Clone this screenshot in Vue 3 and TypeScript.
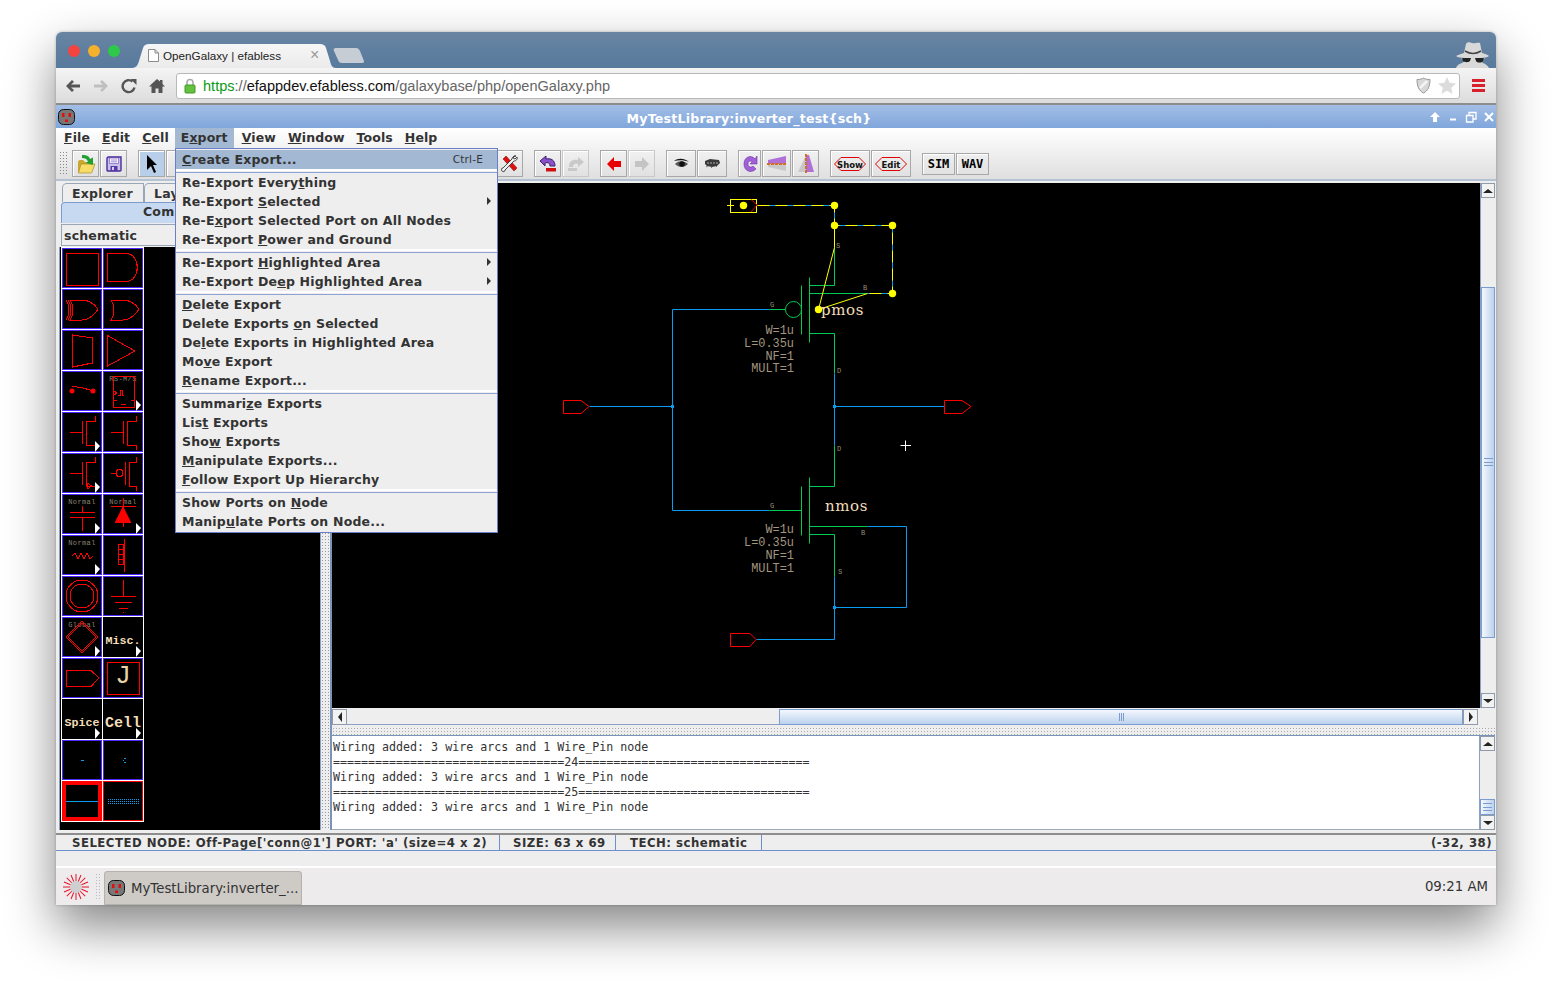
<template>
  <div class="stage">
    <div class="win">
      <div class="tabstrip">
        <div class="lights"><i class="red"></i><i class="amber"></i><i class="green"></i></div>
        <div class="tab">
          <svg class="tab-shape" width="204" height="25" viewBox="0 0 204 25">
            <defs>
              <linearGradient id="tabfill" x1="0" y1="0" x2="0" y2="1">
                <stop offset="0" stop-color="#f6f6f6" />
                <stop offset="1" stop-color="#ebebeb" />
              </linearGradient>
            </defs>
            <path d="M0 25C5 25 6 21 7 18L11 5C12 2 14 1 17 1H188C191 1 193 2 194 5L198 18C199 22 200 25 204 25Z" fill="url(#tabfill)" />
          </svg>
          <svg class="page-ico" width="11" height="13" viewBox="0 0 11 13"><path d="M.5.5h6.500l3.500 3.500v8.500h-10zM7 .5v3.500h3.500" fill="#fff" stroke="#8b8b8b" /></svg>
          <span class="tab-title">OpenGalaxy | efabless</span>
          <span class="tab-close">×</span>
        </div>
        <svg class="newtab" width="32" height="15" viewBox="0 0 32 15"><path d="M3 0H23C25 0 26 1 27 3L31 13C31 14 31 15 29 15H9C7 15 6 14 5.500 13L1 3C0 1 1 0 3 0Z" fill="#c6cdd4" /></svg>
        <svg class="spy" width="38" height="27" viewBox="0 0 38 27">
          <path d="M11 12L13 3C14 1 16 1 19 2C22 3 25 1 27 2L29 12C33 13 35 14 36 15C33 17 29 17 20 17C11 17 6 17 3 15C5 14 8 13 11 12Z" fill="#d9d9d9" />
          <path d="M8 17C10 19 11 20 12 20L9 22C5 23 4 25 3 27H36C35 25 33 23 30 22L28 20C30 19 31 18 32 17Z" fill="#d9d9d9" />
          <path d="M9 17H18L17 20C15 22 11 21 10 20ZM22 17H31L30 20C29 22 24 22 23 20Z" fill="#222" />
          <path d="M12 10C17 13 23 13 28 10" stroke="#444" stroke-width="1.500" fill="none" />
        </svg>
      </div>

      <div class="navbar">
        <svg class="nav-ico" width="16" height="16" viewBox="0 0 16 16"><path d="M1 8L7 2L9 4L6 6.500H15V9.500H6L9 12L7 14Z" fill="#555" /></svg>
        <svg class="nav-ico" width="16" height="16" viewBox="0 0 16 16"><path d="M15 8L9 2L7 4L10 6.500H1V9.500H10L7 12L9 14Z" fill="#bfbfbf" /></svg>
        <svg class="nav-ico" width="16" height="16" viewBox="0 0 16 16"><path d="M13.500 9.500A6 6 0 1 1 11.500 3.500" fill="none" stroke="#555" stroke-width="2.400" /><path d="M9.500 1L15.500 1V7z" fill="#555" /></svg>
        <svg class="nav-ico" width="16" height="16" viewBox="0 0 16 16"><path d="M8 1L0 8.500h2.500V15h4v-4.500h3V15h4V8.500H16L13.500 6V2h-2.500v1.500z" fill="#555" /></svg>
        <div class="urlbox">
          <svg width="12" height="16" viewBox="0 0 12 16"><path d="M3 7V4.500a3 3 0 0 1 6 0V7" fill="none" stroke="#aaa" stroke-width="1.600" /><rect x="1" y="7" width="10" height="8" rx="1" fill="#66c040" stroke="#3d9a26" /></svg>
          <span class="url"><b>https</b><em>://</em><strong>efappdev.efabless.com</strong><em>/galaxybase/php/openGalaxy.php</em></span>
          <svg class="shield" width="15" height="17" viewBox="0 0 15 17"><path d="M1 2.500C4 2.500 6 2 7.500 1C9 2 11 2.500 14 2.500C14 9 12 14 7.500 16C3 14 1 9 1 2.500Z" fill="#d8d8d8" stroke="#999" /><path d="M4 11L11 4" stroke="#f4f4f4" stroke-width="2.500" /></svg>
          <svg width="18" height="17" viewBox="0 0 18 17"><path d="M9 0l2.600 5.800 6.400.7-4.800 4.200 1.400 6.300L9 13.800 3.400 17l1.400-6.300L0 6.500l6.400-.7z" fill="#dcdcdc" /></svg>
        </div>
        <div class="burger"><i></i><i></i><i></i></div>
      </div>

      <div class="app">
        <div class="titlebar">
          <svg class="app-ico" width="17" height="16" viewBox="0 0 17 16"><use href="#plugface" /></svg>
          <span class="title-text">MyTestLibrary:inverter_test{sch}</span>
          <div class="winbtns">
            <svg width="12" height="12" viewBox="0 0 12 12"><path d="M6 1L11 6H8V11H4V6H1Z" fill="#fff" /></svg>
            <svg width="12" height="12" viewBox="0 0 12 12"><path d="M3 8.500h6" stroke="#fff" stroke-width="2" /></svg>
            <svg width="12" height="12" viewBox="0 0 12 12"><path d="M1.500 4.500h6.500v6.500h-6.500zM4 4.500v-3h7v6.500h-3" fill="none" stroke="#fff" stroke-width="1.300" /></svg>
            <svg width="12" height="12" viewBox="0 0 12 12"><path d="M2 2l8 8M10 2l-8 8" stroke="#fff" stroke-width="2" /></svg>
          </div>
        </div>

        <svg width="0" height="0" class="defs">
          <defs>
            <g id="plugface">
              <rect x=".5" y=".5" width="16" height="15" rx="5" fill="#777" stroke="#111" />
              <path d="M4 4h2.500v4H4zM10.500 4H13v4h-2.500zM7 10.500h3V13H7z" fill="#e01010" />
            </g>
          </defs>
        </svg>

        <div class="commands">
          <div class="menubar">
            <span v-for="m in topMenus" :key="m.label" class="top-item" :class="{ open: m.label === 'E_xport' }">{{ splitLabel(m.label)[0] }}<u>{{ splitLabel(m.label)[1] }}</u>{{ splitLabel(m.label)[2] }}</span>
          </div>
          <div class="toolbar">
            <div class="grip"></div>
            <button class="tb">
              <svg width="20" height="20" viewBox="0 0 20 20"><path d="M2 8C2 7 3 6 4 6H7L9 8H15C16 8 16 9 16 10H6L3 18H2Z" fill="#c9a830" /><path d="M5 10H19L16 18C16 19 15 19 14 19H2.500Z" fill="#f8dc68" stroke="#a88c28" stroke-width=".7" /><path d="M6 1C11 1 13 2 14 5L17 3.500L17 11L10 9L12 7.500C11 5 9 4 6 4Z" fill="#20a030" /></svg>
            </button>
            <button class="tb">
              <svg width="16" height="16" viewBox="0 0 16 16"><path d="M1 2.500C1 1.500 1.500 1 2.500 1H15V14C15 15 14.500 15 14 15H2C1.500 15 1 14.500 1 14Z" fill="#c9c3e8" stroke="#4a2a9a" stroke-width="1.400" /><path d="M3.500 2h9v5.500h-9z" fill="#f4f2fb" stroke="#6a4ab8" stroke-width=".6" /><path d="M5 4h6M5 5.800h6" stroke="#8a70c8" stroke-width=".7" /><path d="M4.500 10h7v5h-7z" fill="#5a38a8" /><path d="M6 11h2v3H6z" fill="#d8d0f0" /></svg>
            </button>
            <button class="tb active first">
              <svg width="14" height="19" viewBox="0 0 14 19"><path d="M2 1l10 10H8l3 7-2 1-3-7-4 4z" fill="#000" /></svg>
            </button>
            <button class="tb hidden-btn"></button>
            <div class="tb-spacer"></div>
            <button class="tb">
              <svg width="18" height="18" viewBox="0 0 18 18"><path d="M2 4l3-3 11 12-3 3z" fill="#e01010" stroke="#700" stroke-width=".5" /><path d="M15 1c-2 0-4 1-4 3L2 13c-2 0-2 2-1 3s3 1 3-1l9-9c2 0 4-2 3-4l-2 2-2-1 1-2z" fill="#eee" stroke="#222" stroke-width=".8" /></svg>
            </button>
            <button class="tb group">
              <svg width="18" height="18" viewBox="0 0 18 18"><path d="M7 1L1 6l5 5V8c3-1 5 0 5 3h5C16 5 12 3 7 4z" fill="#8a50c8" stroke="#3a2070" /><rect x="7" y="13" width="10" height="3.500" fill="#d01010" /></svg>
            </button>
            <button class="tb dim">
              <svg width="18" height="18" viewBox="0 0 18 18"><path d="M11 2l6 5-6 5V9C8 8 6 9 6 12H2C2 6 6 4 11 5z" fill="#c9c9c9" /><rect x="1" y="13" width="9" height="3" fill="#c9c9c9" /></svg>
            </button>
            <button class="tb group">
              <svg width="14" height="14" viewBox="0 0 14 14"><path d="M0 7L7 0v4h7v6H7v4z" fill="#e80000" /></svg>
            </button>
            <button class="tb dim">
              <svg width="14" height="14" viewBox="0 0 14 14"><path d="M14 7L7 0v4H0v6h7v4z" fill="#c4c4c4" /></svg>
            </button>
            <button class="tb group wide">
              <svg width="17" height="11" viewBox="0 0 17 11"><path d="M1 3C5 0 11 0 16 4C12 2 6 2 1 3Z" fill="#111" /><path d="M2 6C6 2 11 3 15 6C11 10 6 10 2 6Z" fill="#555" /><circle cx="9" cy="6" r="2.800" fill="#111" /></svg>
            </button>
            <button class="tb wide">
              <svg width="17" height="9" viewBox="0 0 17 9"><path d="M1 2L6 0L15 1L16 4L13 7L8 8L3 7L1 5Z" fill="#3a3a3a" /><path d="M3 4h11" stroke="#aaa" stroke-dasharray="2 1" /><path d="M2 8l2-1M7 9l1-1M12 8l1-1" stroke="#555" stroke-width=".7" /></svg>
            </button>
            <button class="tb group narrow">
              <svg width="16" height="20" viewBox="0 0 16 20"><path d="M13 5C9 0 2 3 2 10C2 17 9 20 14 15L11 12C9 14 6 13 6 10C6 7 9 6 10 8L8 10H15V2Z" fill="#a060d8" stroke="#7030a8" stroke-width=".6" /></svg>
            </button>
            <button class="tb mid">
              <svg width="22" height="16" viewBox="0 0 22 16"><path d="M2 4L20 0V8H2Z" fill="#b070d8" /><path d="M2 8H20V15L2 11Z" fill="#c8c8c8" /><path d="M1 8h20" stroke="#d07020" stroke-width="2" stroke-dasharray="3 1" /></svg>
            </button>
            <button class="tb">
              <svg width="18" height="20" viewBox="0 0 18 20"><path d="M1 18L9 1V18Z" fill="#c8c8c8" /><path d="M9 1H12L17 18H9Z" fill="#b070d8" /><path d="M9 0V20" stroke="#d07020" stroke-width="2" stroke-dasharray="3 1" /></svg>
            </button>
            <button class="tb group hexbtn">
              <svg width="32" height="14" viewBox="0 0 32 14"><path d="M.5 7L7 .5H25L31.500 7L25 13.500H7Z" fill="none" stroke="#e00000" /><text x="16" y="10.500" text-anchor="middle" class="hex-text">Show</text></svg>
            </button>
            <button class="tb hexbtn">
              <svg width="32" height="14" viewBox="0 0 32 14"><path d="M.5 7L7 .5H25L31.500 7L25 13.500H7Z" fill="none" stroke="#e00000" /><text x="16" y="10.500" text-anchor="middle" class="hex-text">Edit</text></svg>
            </button>
            <button class="tb group textbtn">SIM</button>
            <button class="tb textbtn">WAV</button>
          </div>
        </div>

        <div class="main">
          <div class="side">
            <div class="side-tabs">
              <span class="s-tab">Explorer</span>
              <span class="s-tab">Lay</span>
            </div>
            <div class="comp-head">Comp</div>
            <div class="combo">schematic</div>
            <div class="palette-area">
              <div class="palette">
                <div v-for="(c, i) in palette" :key="i" class="cell" :class="c.cls">
                  <svg width="40" height="40" viewBox="0 0 40 40">
                    <text v-if="c.small" x="20" y="10" class="cell-small">{{ c.small }}</text>
                    <path v-if="c.d" :d="c.d" class="cell-red" />
                    <path v-if="c.fill" :d="c.fill" class="cell-redfill" />
                    <path v-if="c.blue" :d="c.blue" class="cell-blue" />
                    <text v-if="c.big" x="20" :y="c.bigY" class="cell-big" :style="{ fontSize: c.bigSize + 'px' }">{{ c.big }}</text>
                    <path v-if="c.more" d="M33 29l5 5-5 6z" fill="#fff" />
                  </svg>
                </div>
              </div>
            </div>
          </div>

          <div class="vsplit"></div>

          <div class="work">
            <div class="canvas-row">
              <svg class="schematic" viewBox="332 183 1148 525" width="1148" height="525">
                <g transform="translate(.5 .5)">
                  <g class="w-blue">
                    <path d="M589 406H672M672 309V510M672 309H769M672 510H769M834 373V445M834 406H944M867 526H906V607H834M834 576V639H756" />
                    <path d="M757 205H834V225H892V293H867" />
                  </g>
                  <path class="w-yellow dash" d="M757 205H834V225H892V293H867" />
                  <g class="w-green">
                    <path d="M769 309H785M809 277V342M801 285V334M809 285H834V247M809 293H867M809 333H834V373" />
                    <path d="M769 510H801M809 477V543M801 486V535M809 486H834V445M809 526H867M809 534H834V576" />
                    <circle cx="793" cy="309" r="8" fill="none" />
                  </g>
                  <path class="w-yellow" d="M834 225V247L818 309L867 293" />
                </g>
                <g fill="#0a9cf0">
                  <rect x="671" y="405" width="3" height="3" />
                  <rect x="833" y="405" width="3" height="3" />
                  <rect x="833" y="606" width="3" height="3" />
                </g>
                <rect x="730.500" y="199.500" width="26" height="13" class="sel-box" />
                <path d="M727 205.500H734" stroke="#ff0" />
                <path d="M751 199.500L757 205L751 212" stroke="#e00000" fill="none" />
                <g fill="#ff0">
                  <circle cx="743.500" cy="205.500" r="3.700" />
                  <circle cx="834.500" cy="205.500" r="3.700" />
                  <circle cx="834.500" cy="225.500" r="3.700" />
                  <circle cx="892.500" cy="225.500" r="3.700" />
                  <circle cx="892.500" cy="293.500" r="3.700" />
                  <circle cx="818.500" cy="309.500" r="3.700" />
                </g>
                <g class="conn">
                  <path d="M563.500 400.500H581L589 406.500L581 413.500H563.500Z" />
                  <path d="M944.500 400.500H962L971 406.500L962 413.500H944.500Z" />
                  <path d="M730.500 633.500H750L756 639.500L750 646.500H730.500Z" />
                </g>
                <text x="821" y="315" class="dev-name">pmos</text>
                <text x="825" y="511" class="dev-name">nmos</text>
                <g class="pin">
                  <text x="770" y="307">G</text><text x="836" y="248">S</text><text x="863" y="290">B</text><text x="837" y="373">D</text>
                  <text x="770" y="508">G</text><text x="861" y="535">B</text><text x="838" y="574">S</text><text x="837" y="451">D</text>
                </g>
                <g class="params">
                  <text x="794" y="334">W=1u</text><text x="794" y="347">L=0.35u</text><text x="794" y="360">NF=1</text><text x="794" y="372">MULT=1</text>
                  <text x="794" y="533">W=1u</text><text x="794" y="546">L=0.35u</text><text x="794" y="559">NF=1</text><text x="794" y="572">MULT=1</text>
                </g>
                <path d="M900.500 445.500H911M905.500 440.500V451" stroke="#fff" fill="none" />
              </svg>
              <div class="vscroll">
                <span class="arrow up"></span>
                <span class="track" style="flex: 89"></span>
                <span class="thumb" style="flex: 350"><i class="grip-h"></i></span>
                <span class="track" style="flex: 55"></span>
                <span class="arrow down"></span>
              </div>
            </div>

            <div class="hscroll">
              <span class="arrow left"></span>
              <span class="htrack"></span>
              <span class="hthumb"><i class="grip-v"></i></span>
              <span class="arrow right"></span>
            </div>

            <div class="hsplit"></div>

            <div class="log-row">
              <pre class="log">{{ logText }}</pre>
              <div class="vscroll log-scroll">
                <span class="arrow up"></span>
                <span class="track" style="flex: 48"></span>
                <span class="thumb" style="flex: 14"><i class="grip-h"></i></span>
                <span class="arrow down"></span>
              </div>
            </div>
          </div>
        </div>

        <div class="status">
          <span class="st-cell st-a">SELECTED NODE: Off-Page['conn@1'] PORT: 'a' (size=4 x 2)</span>
          <span class="st-cell st-b">SIZE: 63 x 69</span>
          <span class="st-cell st-c">TECH: schematic</span>
          <span class="st-coord">(-32, 38)</span>
        </div>
        <div class="spare"></div>

        <div class="taskbar">
          <svg class="task-logo" width="28" height="28" viewBox="0 0 28 28">
            <circle cx="14" cy="14" r="6" fill="#cfcfcf" />
            <g stroke="#e8102a" stroke-width="1">
              <path v-for="a in rays" :key="a" d="M14 1V8" :transform="`rotate(${a} 14 14)`" />
            </g>
          </svg>
          <div class="task-grip"></div>
          <div class="task-btn">
            <svg width="17" height="16" viewBox="0 0 17 16"><use href="#plugface" /></svg>
            <span>MyTestLibrary:inverter_...</span>
          </div>
          <span class="clock">09:21 AM</span>
        </div>

        <div class="popup">
          <template v-for="(row, i) in exportMenu" :key="i">
            <div v-if="row.sep" class="m-sep"></div>
            <div v-else class="m-item" :class="{ hot: row.hot }">
              <span>{{ splitLabel(row.label!)[0] }}<u>{{ splitLabel(row.label!)[1] }}</u>{{ splitLabel(row.label!)[2] }}</span>
              <span v-if="row.key" class="m-key">{{ row.key }}</span>
              <i v-if="row.sub" class="m-sub"></i>
            </div>
          </template>
        </div>
      </div>
    </div>
  </div>
</template>

<script setup lang="ts">
interface MenuRow {
  label?: string
  sep?: boolean
  sub?: boolean
  hot?: boolean
  key?: string
}

interface Cell {
  d?: string
  fill?: string
  blue?: string
  small?: string
  big?: string
  bigY?: number
  bigSize?: number
  more?: boolean
  cls?: string
}

// "_" marks the mnemonic letter
const splitLabel = (text: string): [string, string, string] => {
  const at = text.indexOf('_')
  if (at < 0) return [text, '', '']
  return [text.slice(0, at), text.charAt(at + 1), text.slice(at + 2)]
}

const topMenus = [
  { label: '_File' },
  { label: '_Edit' },
  { label: '_Cell' },
  { label: 'E_xport' },
  { label: '_View' },
  { label: '_Window' },
  { label: '_Tools' },
  { label: '_Help' }
]

const exportMenu: MenuRow[] = [
  { label: '_Create Export...', key: 'Ctrl-E', hot: true },
  { sep: true },
  { label: 'Re-Export Every_thing' },
  { label: 'Re-Export _Selected', sub: true },
  { label: 'Re-E_xport Selected Port on All Nodes' },
  { label: 'Re-Export _Power and Ground' },
  { sep: true },
  { label: 'Re-Export _Highlighted Area', sub: true },
  { label: 'Re-Export De_ep Highlighted Area', sub: true },
  { sep: true },
  { label: '_Delete Export' },
  { label: 'Delete Exports _on Selected' },
  { label: 'De_lete Exports in Highlighted Area' },
  { label: 'Mo_ve Export' },
  { label: '_Rename Export...' },
  { sep: true },
  { label: 'Summari_ze Exports' },
  { label: 'Lis_t Exports' },
  { label: 'Sho_w Exports' },
  { label: '_Manipulate Exports...' },
  { label: '_Follow Export Up Hierarchy' },
  { sep: true },
  { label: 'Show Ports on _Node' },
  { label: 'Manip_ulate Ports on Node...' }
]

const mos = 'M8 20H20M20 9V32M24 9V33M24 9H33V4M24 33H33V38'

const palette: Cell[] = [
  { d: 'M4.500 5.500H36.500V37H4.500Z' },
  { d: 'M4.500 5.500H23C38 5.500 38 33.500 23 33.500H4.500Z' },
  { d: 'M8 11H20C27 11 33 16 36 20C33 25 27 31 20 31H8C12 25 12 17 8 11ZM4 11C8 17 8 25 4 31M6 11C10 17 10 25 6 31' },
  { d: 'M8 11H20C27 11 33 16 36 20C33 25 27 31 20 31H8C12 25 12 17 8 11Z' },
  { d: 'M10.500 5L30.500 8V33L10.500 37Z' },
  { d: 'M4.500 5.500L32 21L4.500 36Z' },
  { d: 'M10 16C18 15 24 18 31 20', fill: 'M7.500 20a2.500 2.500 0 1 0 5 0a2.500 2.500 0 1 0-5 0M28.500 20a2.500 2.500 0 1 0 5 0a2.500 2.500 0 1 0-5 0' },
  { small: 'RS-M/S', d: 'M10.500 5H31V36H10.500ZM11 20l3 2-3 2M15 24h2V19h2v5h2M11 29h3M18 33h5M28 29h3', more: true },
  { d: mos, more: true },
  { d: mos },
  { d: `${mos}M30 33l-5-3v6z`, more: true },
  { d: 'M8 20H13M13 20a3.500 3.500 0 1 0 7 0a3.500 3.500 0 1 0-7 0M22 9V32M26 9V33M26 9H33V4M26 33H33V38' },
  { small: 'Normal', d: 'M20 12V18M8 18H33M8 23H33M20 23V37', more: true },
  { small: 'Normal', d: 'M20 4V33M8 12H33', fill: 'M20 12L28 28H12ZM12 28H28V29H12Z', more: true },
  { small: 'Normal', d: 'M10 21L13 18L16 24L19 18L22 24L25 18L28 24L31 21', more: true },
  { d: 'M21 4V37M15 12a3 3 0 1 0 6 0a3 3 0 1 0-6 0M15 17a3 3 0 1 0 6 0a3 3 0 1 0-6 0M15 22a3 3 0 1 0 6 0a3 3 0 1 0-6 0M15 27a3 3 0 1 0 6 0a3 3 0 1 0-6 0' },
  { d: 'M4 20a16 16 0 1 0 32 0a16 16 0 1 0-32 0M8 20a12 12 0 1 0 24 0a12 12 0 1 0-24 0' },
  { d: 'M20 4V20M8 20.500H33M12 26.500H29M16 32.500H25M20 36.500H21' },
  { small: 'Global', d: 'M20 4L36 20L20 36L4 20ZM20 6L34 20L20 34L6 20Z', more: true },
  { big: 'Misc.', bigY: 27, bigSize: 11.700, more: true, cls: 'plain' },
  { d: 'M4.500 12.500H29L37 20L29 28.500H4.500Z' },
  { d: 'M4 4H36V36H4Z', big: 'J', bigY: 25, bigSize: 26, cls: 'redbox' },
  { big: 'Spice', bigY: 27, bigSize: 11.700, more: true, cls: 'plain' },
  { big: 'Cell', bigY: 28, bigSize: 15, more: true, cls: 'plain' },
  { blue: 'M18.500 20H21.500' },
  { blue: 'M21 18h1.500M19.500 20H21M21 22h1.500' },
  { blue: 'M4 20H36', cls: 'selected' },
  { blue: 'M5 18.500H36M5 20.500H36M5 22.500H36', cls: 'selected-thin dots' }
]

const rays = Array.from({ length: 16 }, (_, i) => i * 22.5)

const rule = '='.repeat(33)
const logText = [
  'Wiring added: 3 wire arcs and 1 Wire_Pin node',
  `${rule}24${rule}`,
  'Wiring added: 3 wire arcs and 1 Wire_Pin node',
  `${rule}25${rule}`,
  'Wiring added: 3 wire arcs and 1 Wire_Pin node'
].join('\n')
</script>

<style>
html,
body {
  margin: 0;
  background: #fff;
  overflow: hidden;
}
</style>

<style scoped>
.stage {
  width: 1552px;
  height: 985px;
  padding: 32px 56px 0;
  box-sizing: border-box;
  overflow: hidden;
  font-family: "DejaVu Sans", sans-serif;
  color: #333;
}

.win {
  width: 1440px;
  height: 873px;
  display: flex;
  flex-direction: column;
  border-radius: 6px 6px 0 0;
  box-shadow: 0 22px 50px rgba(0, 0, 0, 0.48), 0 0 3px rgba(0, 0, 0, 0.25);
  background: #eee;
}

/* browser chrome */
.tabstrip {
  height: 36px;
  flex: none;
  display: flex;
  align-items: flex-end;
  position: relative;
  border-radius: 6px 6px 0 0;
  background: linear-gradient(#6884a2, #587a9d);
}

.lights {
  display: flex;
  gap: 8px;
  position: absolute;
  left: 12px;
  top: 13px;
}

.lights i {
  width: 12px;
  height: 12px;
  border-radius: 50%;
}

.lights .red { background: #f5443f; }
.lights .amber { background: #f5b02c; }
.lights .green { background: #2ec94a; }

.tab {
  width: 204px;
  height: 25px;
  margin-left: 76px;
  position: relative;
  display: flex;
  align-items: center;
  flex: none;
}

.tab-shape {
  position: absolute;
  left: 0;
  top: 0;
}

.page-ico {
  position: relative;
  margin-left: 16px;
}

.tab-title {
  position: relative;
  margin-left: 4px;
  font: 11.700px "Liberation Sans", sans-serif;
  color: #222;
}

.tab-close {
  position: absolute;
  left: 178px;
  top: 3px;
  font: 16px "Liberation Sans", sans-serif;
  color: #999;
}

.newtab {
  margin: 0 0 5px -3px;
  flex: none;
}

.spy {
  margin: 0 5px 0 auto;
}

.navbar {
  height: 35px;
  flex: none;
  display: flex;
  align-items: center;
  box-sizing: border-box;
  padding-left: 9px;
  background: linear-gradient(#f4f4f4, #dcdcdc);
}

.nav-ico {
  margin-right: 12px;
  flex: none;
}

.urlbox {
  width: 1284px;
  height: 26px;
  margin-left: -1px;
  box-sizing: border-box;
  border: 1px solid #b9b9b9;
  border-radius: 3px;
  background: #fff;
  display: flex;
  align-items: center;
  padding: 0 3px 0 7px;
  gap: 7px;
}

.url {
  flex: 1;
  font: 14.550px "Liberation Sans", sans-serif;
  color: #111;
}

.url b {
  font-weight: normal;
  color: #0a9a14;
}

.url em {
  font-style: normal;
  color: #666;
}

.url strong {
  font-weight: normal;
}

.burger {
  margin-left: 12px;
  width: 13px;
  display: flex;
  flex-direction: column;
  gap: 2px;
}

.burger i {
  height: 3px;
  background: #d9202c;
}

/* java app */
.app {
  flex: 1;
  min-height: 0;
  display: flex;
  flex-direction: column;
  position: relative;
  border-top: 2px solid #8d8d8d;
}

.titlebar {
  height: 23px;
  flex: none;
  box-sizing: border-box;
  padding-top: 3px;
  display: flex;
  align-items: center;
  justify-content: center;
  position: relative;
  background: linear-gradient(#a3bee6, #80a6db);
}

.app-ico {
  position: absolute;
  left: 2px;
  top: 4px;
}

.title-text {
  font-size: 12.600px;
  font-weight: bold;
  letter-spacing: 0.2px;
  color: #fff;
  margin-right: 54px;
}

.winbtns {
  position: absolute;
  right: 1px;
  top: 6px;
  display: flex;
  gap: 6px;
}

.defs {
  position: absolute;
}

.commands {
  flex: none;
  background: linear-gradient(#fff, #dfdfdf);
  border-bottom: 2px solid #b4c2d4;
}

.menubar {
  height: 20px;
  display: flex;
  padding-left: 2px;
}

.top-item {
  padding: 0 6px;
  font-size: 12.500px;
  font-weight: bold;
  letter-spacing: 0.1px;
  line-height: 20px;
  white-space: pre;
}

.top-item.open {
  background: #a3b9d3;
  margin-right: 2px;
}

.toolbar {
  height: 31px;
  display: flex;
  align-items: center;
}

.grip {
  width: 8px;
  height: 25px;
  margin: 0 5px 0 3px;
  background-image: radial-gradient(#888 0.6px, transparent 0.8px);
  background-size: 3px 3px;
}

.tb {
  width: 27px;
  height: 27px;
  flex: none;
  margin: 0 1px 0 0;
  padding: 0;
  box-sizing: border-box;
  border: 1px solid #a8a8a8;
  background: transparent;
  display: flex;
  align-items: center;
  justify-content: center;
  box-shadow: inset 1px 1px 0 #fff;
}

.tb.first { margin-left: 10px; }
.tb.group { margin-left: 10px; }
.tb.active { background: #b9cee8; }
.tb.dim { border-color: #c8c8c8; }
.tb.wide { width: 30px; }
.tb.narrow { width: 23px; }
.tb.mid { width: 29px; }

.tb-spacer {
  width: 302px;
  flex: none;
}

.tb.hexbtn {
  width: 40px;
}

.hex-text {
  font: bold 8.500px "DejaVu Sans", sans-serif;
  fill: #111;
}

.tb.textbtn {
  width: 33px;
  height: 22px;
  font: bold 12px "DejaVu Sans Mono", monospace;
  color: #000;
}

.main {
  flex: 1;
  min-height: 0;
  display: flex;
  padding-left: 3px;
}

.side {
  width: 261px;
  flex: none;
  display: flex;
  flex-direction: column;
  background: #eee;
}

.side-tabs {
  height: 21px;
  flex: none;
  display: flex;
  padding: 2px 0 0 3px;
  box-sizing: border-box;
}

.s-tab {
  padding-left: 9px;
  width: 82px;
  box-sizing: border-box;
  border: 1px solid #9aa5b5;
  border-bottom: none;
  border-radius: 5px 0 0 0;
  font-size: 12.500px;
  font-weight: bold;
  letter-spacing: 0.2px;
  line-height: 20px;
}

.comp-head {
  height: 21px;
  flex: none;
  margin-left: 2px;
  padding-left: 81px;
  background: #c6d9f0;
  border: 1px solid #7a9cd0;
  border-bottom: none;
  border-radius: 4px 0 0 0;
  font-size: 12.500px;
  font-weight: bold;
  letter-spacing: 0.2px;
  line-height: 18px;
  box-sizing: border-box;
}

.combo {
  height: 22px;
  flex: none;
  margin: 1px 0 0 2px;
  box-sizing: border-box;
  border: 1px solid #9aa5b5;
  padding: 1px 0 0 2px;
  font-size: 12.500px;
  font-weight: bold;
  letter-spacing: 0.2px;
  line-height: 20px;
}

.palette-area {
  flex: 1;
  min-height: 0;
  margin-top: 1px;
  background: #000;
  padding: 1px 0 0 2px;
  border-left: 1px solid #8aa0c4;
}

.palette {
  display: grid;
  grid-template-columns: repeat(2, 40px);
  grid-auto-rows: 40px;
  gap: 1px;
  width: 81px;
  background: #fff;
  outline: 1px solid #fff;
}

.cell {
  width: 40px;
  height: 40px;
  box-sizing: border-box;
  background: #000;
  outline: 1px solid #4a28ff;
  outline-offset: -1px;
  position: relative;
}

.cell svg {
  display: block;
  position: absolute;
  left: 0;
  top: 0;
}

.cell.plain {
  outline: none;
}

.cell.selected {
  outline: 4px solid #f00;
  outline-offset: -4px;
}

.cell.selected-thin {
  outline-color: #f00;
}

.cell-red {
  fill: none;
  stroke: #f00;
  shape-rendering: crispEdges;
}

.cell-redfill {
  fill: #f00;
}

.cell-blue {
  fill: none;
  stroke: #0a9cf0;
  shape-rendering: crispEdges;
}

.dots .cell-blue {
  stroke-dasharray: 1 1;
}

.cell-small {
  font: 7px "Liberation Mono", monospace;
  letter-spacing: 0.4px;
  fill: #8a8272;
  text-anchor: middle;
}

.cell-big {
  font-family: "Liberation Mono", monospace;
  font-weight: bold;
  fill: #f2deb8;
  text-anchor: middle;
}

.redbox .cell-big {
  font-weight: normal;
  fill: #e8d4a8;
}

.vsplit {
  width: 12px;
  flex: none;
  box-sizing: border-box;
  border-left: 1px solid #8aa0c4;
  border-right: 2px solid #7a93b8;
  background: #eee radial-gradient(#999 0.5px, transparent 0.8px) 0 0 / 3px 3px;
}

.work {
  flex: 1;
  min-width: 0;
  display: flex;
  flex-direction: column;
  background: #eee;
  padding-right: 1px;
}

.canvas-row {
  height: 525px;
  flex: none;
  display: flex;
  margin-top: 2px;
}

.schematic {
  display: block;
  flex: none;
  background: #000;
}

.w-blue {
  fill: none;
  stroke: #0a9cf0;
}

.w-green {
  fill: none;
  stroke: #00cc55;
}

.w-yellow {
  fill: none;
  stroke: #ff0;
}

.w-yellow.dash {
  stroke-dasharray: 12 6;
}

.sel-box {
  fill: none;
  stroke: #ff0;
}

.conn path {
  fill: none;
  stroke: #f00;
}

.dev-name {
  font: 15px "DejaVu Serif", serif;
  letter-spacing: 0.6px;
  fill: #f2deb8;
}

.pin text {
  font: 7px "Liberation Mono", monospace;
  fill: #9a8d78;
}

.params text {
  font: 11.900px "Liberation Mono", monospace;
  fill: #a3957f;
  text-anchor: end;
}

.vscroll {
  flex: 1;
  display: flex;
  flex-direction: column;
  background: #eee;
  border-left: 1px solid #8aa0c4;
}

.arrow {
  flex: none;
  width: 100%;
  height: 15px;
  position: relative;
  box-sizing: border-box;
  border: 1px solid #8f9bab;
  background: #f2f2f2;
  display: block;
}

.arrow::after {
  content: "";
  position: absolute;
  left: 50%;
  top: 50%;
  width: 0;
  height: 0;
  transform: translate(-50%, -50%);
  border: 4px solid transparent;
}

.arrow.up::after {
  border-bottom-color: #222;
  border-top-width: 0;
  border-left-width: 5px;
  border-right-width: 5px;
}

.arrow.down::after {
  border-top-color: #222;
  border-bottom-width: 0;
  border-left-width: 5px;
  border-right-width: 5px;
}

.arrow.left::after {
  border-right-color: #222;
  border-left-width: 0;
  border-top-width: 5px;
  border-bottom-width: 5px;
}

.arrow.right::after {
  border-left-color: #222;
  border-right-width: 0;
  border-top-width: 5px;
  border-bottom-width: 5px;
}

.track {
  display: block;
  min-height: 0;
  background: #eee;
}

.thumb {
  display: flex;
  align-items: center;
  justify-content: center;
  min-height: 0;
  box-sizing: border-box;
  border: 1px solid #7a9cd0;
  background: linear-gradient(90deg, #f4f8fd, #bcd2ee);
}

.grip-h {
  width: 9px;
  height: 6px;
  border-top: 1px solid #7a9cd0;
  border-bottom: 1px solid #7a9cd0;
  background: linear-gradient(#7a9cd0, #7a9cd0) center / 100% 1px no-repeat;
}

.hscroll {
  height: 16px;
  flex: none;
  margin-top: 1px;
  display: flex;
  align-items: stretch;
  width: 1146px;
}

.hscroll .arrow {
  width: 15px;
  height: auto;
}

.htrack {
  width: 432px;
  flex: none;
  background: #eee;
  border-bottom: 1px solid #8aa0c4;
}

.hthumb {
  flex: 1;
  display: flex;
  align-items: center;
  justify-content: center;
  box-sizing: border-box;
  border: 1px solid #7a9cd0;
  background: linear-gradient(#f4f8fd, #bcd2ee);
}

.grip-v {
  width: 5px;
  height: 8px;
  background: repeating-linear-gradient(90deg, #7a9cd0 0 1px, transparent 1px 2px);
}

.hsplit {
  height: 9px;
  flex: none;
  margin-top: 2px;
  box-sizing: border-box;
  border-bottom: 1px solid #7a93b8;
  background: #eee radial-gradient(#aaa 0.5px, transparent 0.8px) 0 0 / 3px 3px;
}

.log-row {
  flex: 1;
  min-height: 0;
  display: flex;
  background: #fff;
}

.log {
  width: 1147px;
  flex: none;
  margin: 0;
  padding: 4px 0 0 1px;
  box-sizing: border-box;
  font: 11.650px/15px "DejaVu Sans Mono", monospace;
  color: #333;
  border-bottom: 1px solid #a0aab8;
}

.log-scroll {
  background: #eee;
}

.status {
  height: 18px;
  flex: none;
  display: flex;
  box-sizing: border-box;
  margin-top: 3px;
  padding-left: 3px;
  border-top: 2px solid #8d8d8d;
  border-bottom: 1px solid #6d8fd0;
  font-family: "DejaVu Sans Condensed", "DejaVu Sans", sans-serif;
  font-size: 13px;
  font-weight: bold;
  letter-spacing: 0.5px;
  line-height: 15px;
}

.st-cell {
  box-sizing: border-box;
  border-right: 1px solid #6d8fd0;
  white-space: nowrap;
}

.st-a { width: 441px; padding-left: 13px; }
.st-b { width: 116px; padding-left: 13px; }
.st-c { width: 146px; padding-left: 14px; }

.st-coord {
  margin-left: auto;
  padding-right: 4px;
}

.spare {
  height: 17px;
  flex: none;
  box-sizing: border-box;
  border-bottom: 2px solid #fff;
}

.taskbar {
  height: 37px;
  flex: none;
  display: flex;
  align-items: center;
  background: #edebeb;
}

.task-logo {
  margin-left: 6px;
  flex: none;
}

.task-grip {
  width: 6px;
  height: 28px;
  margin: 0 3px 0 5px;
  background-image: radial-gradient(#bbb 0.6px, transparent 0.8px);
  background-size: 3px 3px;
}

.task-btn {
  width: 198px;
  height: 34px;
  align-self: flex-end;
  display: flex;
  align-items: center;
  gap: 6px;
  padding-left: 3px;
  box-sizing: border-box;
  border-radius: 3px 3px 0 0;
  background: #cecac6;
  border: 1px solid #b5b1ad;
  font-size: 13.300px;
  white-space: nowrap;
}

.task-btn svg {
  flex: none;
}

.clock {
  margin-left: auto;
  padding-right: 8px;
  font-size: 13.300px;
}

/* export popup, over the toolbar and side panel */
.popup {
  position: absolute;
  left: 119px;
  top: 43px;
  width: 323px;
  box-sizing: border-box;
  padding: 1px 0 1px;
  background: #eee;
  border: 1px solid #6a7fc8;
  font-size: 12.500px;
  font-weight: bold;
  letter-spacing: 0.2px;
  z-index: 5;
}

.m-item {
  height: 19px;
  line-height: 19px;
  padding-left: 6px;
  position: relative;
  white-space: pre;
}

.m-item.hot {
  background: #a3b9d3;
}

.m-key {
  position: absolute;
  right: 14px;
  top: 0;
  font-size: 10.500px;
  font-weight: normal;
}

.m-sub {
  position: absolute;
  right: 6px;
  top: 5px;
  border: 4px solid transparent;
  border-left-color: #333;
  border-right-width: 0;
}

.m-sep {
  height: 4px;
  box-sizing: border-box;
  border-top: 2px solid #fff;
  border-bottom: 1px solid #8ea2d4;
}
</style>
